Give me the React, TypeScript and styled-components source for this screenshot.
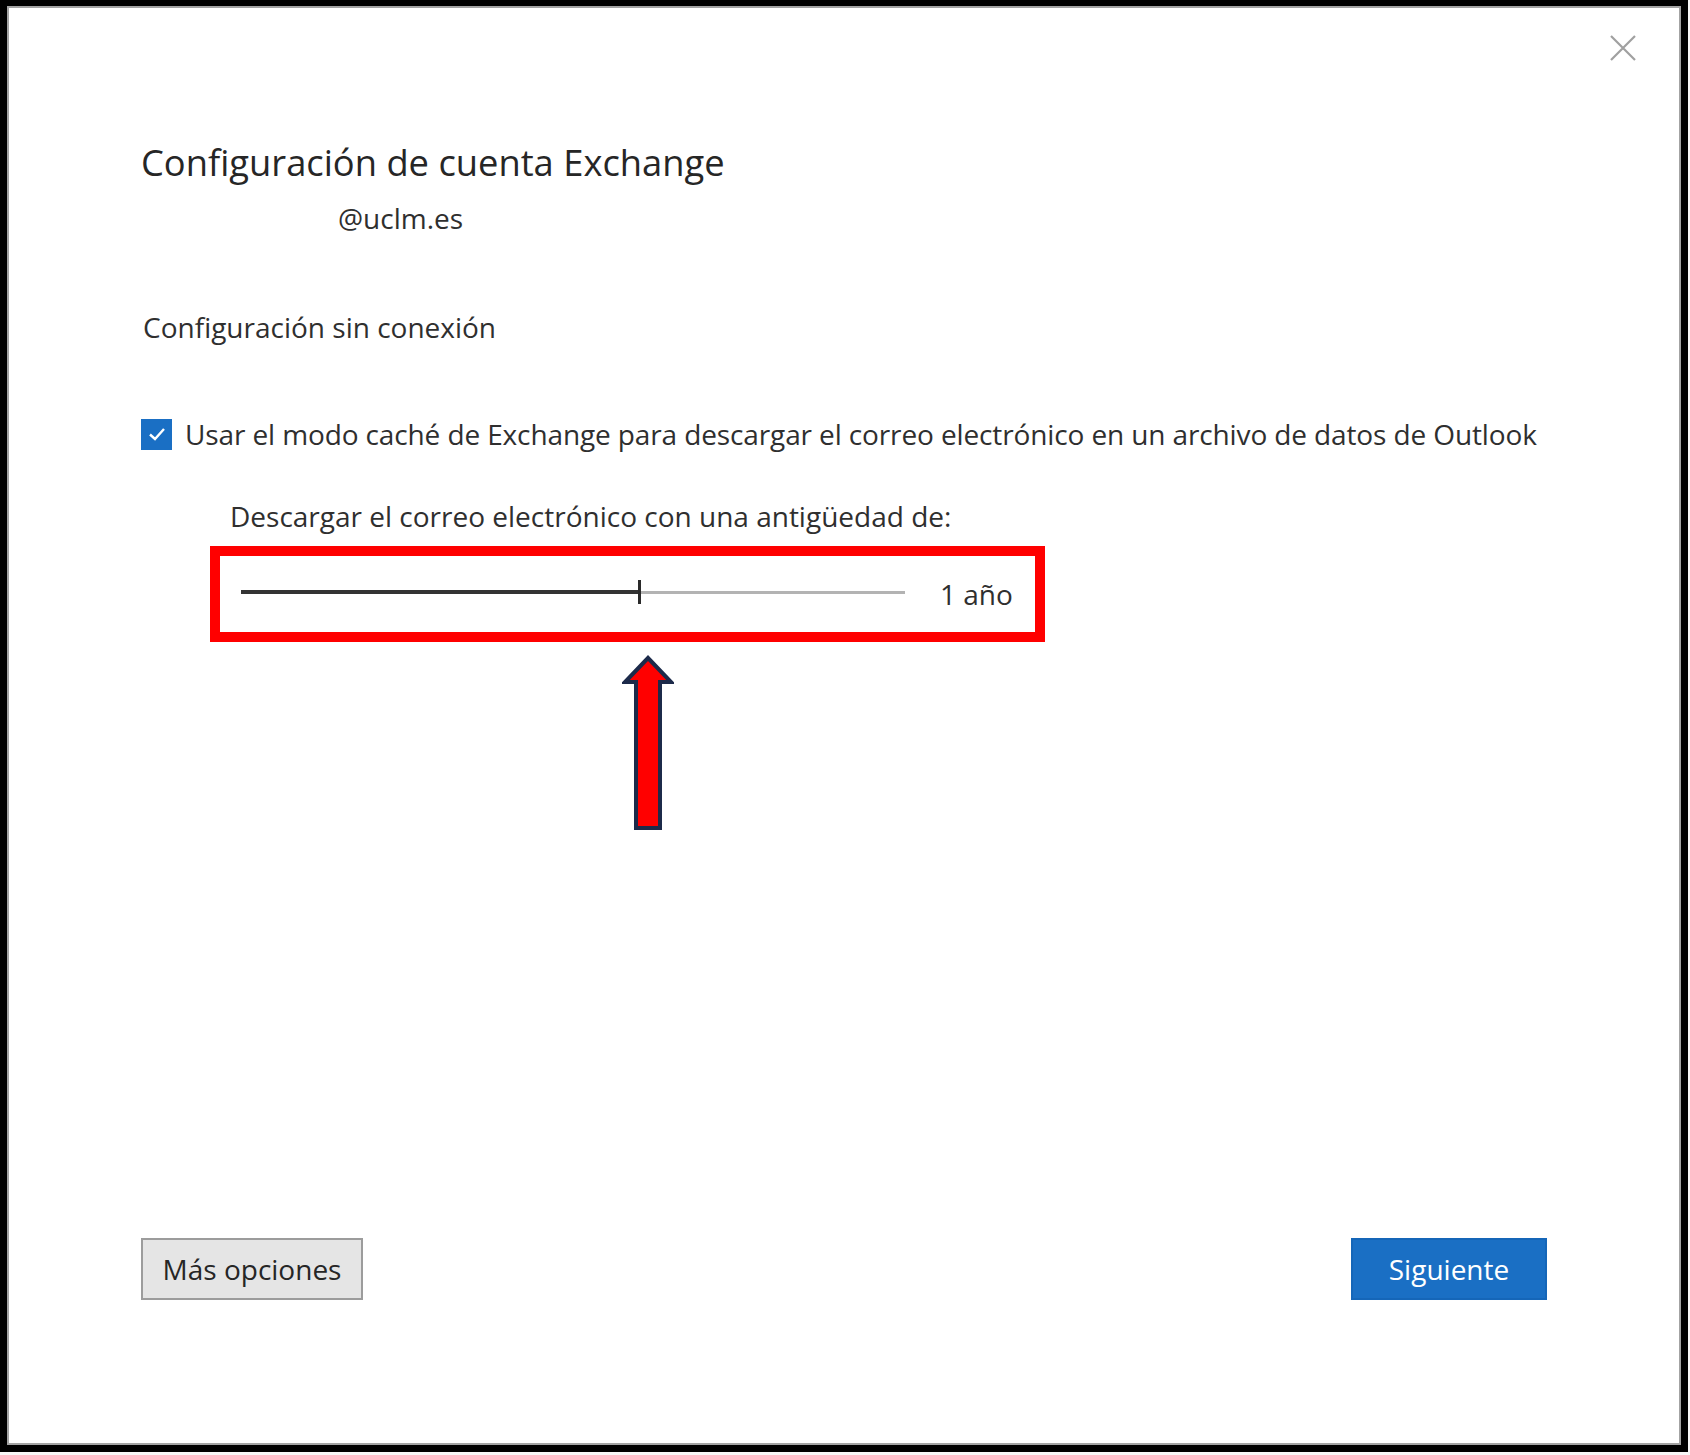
import styled, { createGlobalStyle } from 'styled-components';

const GlobalStyle = createGlobalStyle`
    html, body {
        margin: 0;
        padding: 0;
        background: #f7f7f7;
    }
    * {
        box-sizing: border-box;
    }
`;

const Frame = styled.div`
    width: 1688px;
    height: 1452px;
    border: 7px solid #000;
    border-top-width: 6px;
    background: #000;
`;

const Window = styled.div`
    height: 100%;
    border: 2px solid #a3a3a3;
    background: #fff;
    display: flex;
    flex-direction: column;
    font-family: "Open Sans", "Noto Sans", sans-serif;
    color: #2f2f2f;
`;

const CloseRow = styled.div`
    display: flex;
    justify-content: flex-end;
    padding: 27px 43px 0 0;
`;

const CloseButton = styled.button`
    width: 26px;
    height: 26px;
    padding: 0;
    border: none;
    background: none;
    cursor: pointer;
`;

const Content = styled.div`
    flex: 1;
    display: flex;
    flex-direction: column;
    padding: 0 132px 143px;
`;

const Title = styled.h1`
    margin: 79px 0 0;
    font-size: 36.3px;
    line-height: 44px;
    font-weight: 400;
    color: #262626;
`;

const Account = styled.div`
    margin: 16px 0 0 197px;
    font-size: 28px;
    line-height: 36px;
`;

const Section = styled.h2`
    margin: 73px 0 0 2px;
    font-size: 28px;
    line-height: 36px;
    font-weight: 400;
`;

const CheckRow = styled.label`
    margin-top: 71px;
    display: flex;
    align-items: center;
    gap: 13px;
    font-size: 28px;
    line-height: 36px;
    letter-spacing: -0.12px;
    white-space: nowrap;
`;

const CheckBox = styled.span`
    width: 31px;
    height: 31px;
    background: #1a6fc4;
    display: flex;
    align-items: center;
    justify-content: center;
    flex-shrink: 0;
`;

const SubLabel = styled.div`
    margin: 46px 0 0 89px;
    font-size: 28px;
    line-height: 36px;
`;

const Highlight = styled.div`
    margin: 12px 0 0 69px;
    width: 835px;
    height: 96px;
    border: 10px solid #ff0000;
    display: flex;
    align-items: center;
    gap: 35px;
    padding: 0 0 4px 21px;
`;

const Slider = styled.div`
    position: relative;
    width: 664px;
    height: 24px;
    display: flex;
    align-items: center;
`;

const TrackFill = styled.div<{ value: number }>`
    width: ${(p) => p.value * 100}%;
    height: 4px;
    background: #333;
`;

const TrackRest = styled.div`
    flex: 1;
    height: 3px;
    background: #b3b3b3;
`;

const Thumb = styled.div<{ value: number }>`
    position: absolute;
    left: calc(${(p) => p.value * 100}% - 1px);
    top: 0;
    width: 3px;
    height: 24px;
    background: #2a2a2a;
`;

const SliderValue = styled.span`
    font-size: 28px;
    line-height: 36px;
    margin-top: 4px;
`;

const ArrowWrap = styled.div`
    margin: 13px 0 0 481px;
    width: 52px;
    height: 176px;
`;

const Footer = styled.div`
    margin-top: auto;
    display: flex;
    justify-content: space-between;
    align-items: center;
`;

const Button = styled.button<{ primary?: boolean }>`
    height: 62px;
    width: ${(p) => (p.primary ? '196px' : '222px')};
    font-family: "Open Sans", "Noto Sans", sans-serif;
    font-size: 28px;
    padding: 0;
    border: 2px solid ${(p) => (p.primary ? '#1566b8' : '#9c9c9c')};
    background: ${(p) => (p.primary ? '#1a6fc4' : '#e5e5e5')};
    color: ${(p) => (p.primary ? '#fff' : '#262626')};
    cursor: pointer;
`;

const sliderValue = 0.6;

function App() {
    return (
        <>
            <GlobalStyle />
            <Frame>
                <Window>
                    <CloseRow>
                        <CloseButton aria-label="Cerrar">
                            <svg width="26" height="26" viewBox="0 0 26 26">
                                <path d="M1 1 L25 25 M25 1 L1 25" stroke="#a0a0a0" strokeWidth="2.2" />
                            </svg>
                        </CloseButton>
                    </CloseRow>
                    <Content>
                        <Title>Configuración de cuenta Exchange</Title>
                        <Account>@uclm.es</Account>
                        <Section>Configuración sin conexión</Section>
                        <CheckRow>
                            <CheckBox>
                                <svg width="20" height="20" viewBox="0 0 20 20">
                                    <path d="M3 10.5 L8 15 L17 5" fill="none" stroke="#fff" strokeWidth="2.4" />
                                </svg>
                            </CheckBox>
                            Usar el modo caché de Exchange para descargar el correo electrónico en un archivo de datos de Outlook
                        </CheckRow>
                        <SubLabel>Descargar el correo electrónico con una antigüedad de:</SubLabel>
                        <Highlight>
                            <Slider>
                                <TrackFill value={sliderValue} />
                                <TrackRest />
                                <Thumb value={sliderValue} />
                            </Slider>
                            <SliderValue>1 año</SliderValue>
                        </Highlight>
                        <ArrowWrap>
                            {/* flecha de la captura, apunta al control deslizante */}
                            <svg width="52" height="176" viewBox="0 0 52 176">
                                <polygon
                                    points="26,3 49,27 38,27 38,173 14,173 14,27 3,27"
                                    fill="#ff0000"
                                    stroke="#1c2a4a"
                                    strokeWidth="4"
                                    strokeLinejoin="miter"
                                />
                            </svg>
                        </ArrowWrap>
                        <Footer>
                            <Button>Más opciones</Button>
                            <Button primary>Siguiente</Button>
                        </Footer>
                    </Content>
                </Window>
            </Frame>
        </>
    );
}

export default App;
